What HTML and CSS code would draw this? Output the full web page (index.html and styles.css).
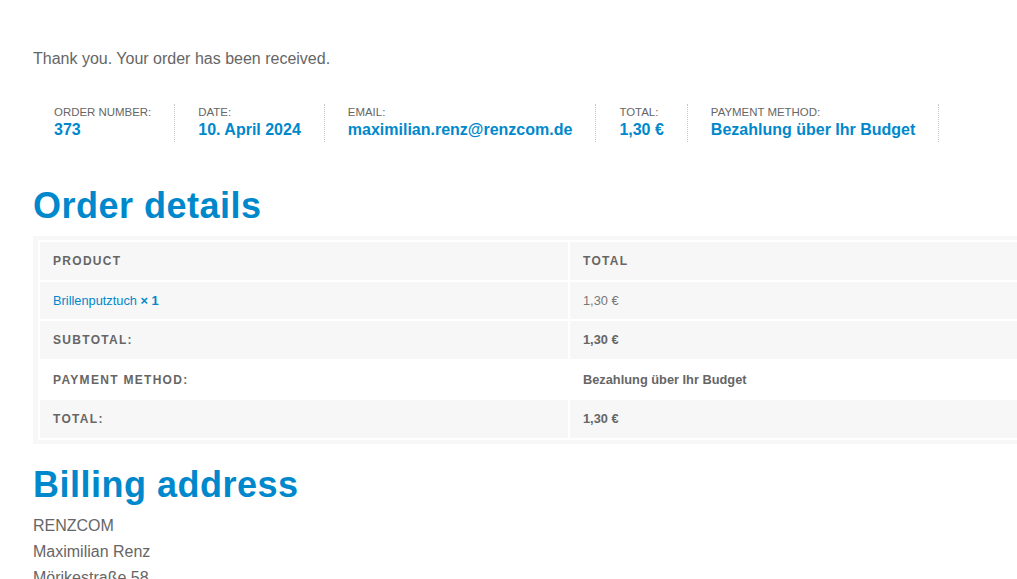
FILE: index.html
```html
<!DOCTYPE html>
<html lang="en">
<head>
    <meta charset="UTF-8">
    <title>Order received</title>
    <link rel="stylesheet" href="styles.css">
</head>
<body>
    <div class="content">
        <p class="thanks">Thank you. Your order has been received.</p>

        <!-- order summary strip -->
        <ul class="order-overview">
            <li>Order number:<strong>373</strong></li>
            <li>Date:<strong>10. April 2024</strong></li>
            <li>Email:<strong>maximilian.renz@renzcom.de</strong></li>
            <li>Total:<strong>1,30 €</strong></li>
            <li>Payment method:<strong>Bezahlung über Ihr Budget</strong></li>
        </ul>

        <h2 class="details-title">Order details</h2>
        <div class="table-wrap">
            <table class="order-table">
                <thead>
                    <tr>
                        <th class="col-product">Product</th>
                        <th>Total</th>
                    </tr>
                </thead>
                <tbody>
                    <tr>
                        <td class="col-product"><a href="#">Brillenputztuch</a> <strong class="qty">× 1</strong></td>
                        <td class="price">1,30 €</td>
                    </tr>
                </tbody>
                <tfoot>
                    <tr>
                        <th>Subtotal:</th>
                        <td class="strong">1,30 €</td>
                    </tr>
                    <tr class="plain">
                        <th>Payment method:</th>
                        <td class="strong">Bezahlung über Ihr Budget</td>
                    </tr>
                    <tr>
                        <th>Total:</th>
                        <td class="strong">1,30 €</td>
                    </tr>
                </tfoot>
            </table>
        </div>

        <h2 class="billing-title">Billing address</h2>
        <address>
            RENZCOM<br>
            Maximilian Renz<br>
            Mörikestraße 58
        </address>
    </div>
</body>
</html>
```

FILE: styles.css
```css
html, body {
    overflow-x: hidden;
}
body {
    margin: 0;
    background: #fff;
    font-family: "Liberation Sans", Arial, sans-serif;
    font-size: 16px;
    color: #666;
}
.content {
    padding-left: 33px;
    width: 1100px;
}
.thanks {
    margin: 47px 0 0;
    line-height: 24px;
}

.order-overview {
    list-style: none;
    margin: 33px 0 0;
    padding: 0 0 0 21px;
    display: flex;
}
.order-overview li {
    font-size: 11.44px;
    line-height: 13px;
    text-transform: uppercase;
    padding: 2px 23px 2px 0;
    margin-right: 23px;
    border-right: 1px dotted #c8c8c8;
}
.order-overview strong {
    display: block;
    margin-top: 1px;
    text-transform: none;
    font-size: 16px;
    line-height: 20px;
    color: #0088cc;
}

h2 {
    margin: 0;
    font-size: 36px;
    line-height: 43px;
    letter-spacing: 0.5px;
    color: #0088cc;
}
.details-title {
    margin-top: 42px;
}

.table-wrap {
    margin-top: 9px;
    background: #f7f7f7;
    padding: 4px 0 4px 5px;
}
.order-table {
    width: 100%;
    background: #fff;
    border-spacing: 2px;
    font-size: 12.8px;
    line-height: 14px;
}
.order-table th,
.order-table td {
    background: #f7f7f7;
    padding: 12px 13px 11.5px;
    text-align: left;
}
.order-table th {
    font-size: 12px;
    font-weight: bold;
    text-transform: uppercase;
    letter-spacing: 1.3px;
    color: #666;
}
.order-table .col-product {
    width: 502px;
}
.order-table a {
    color: #0088cc;
    text-decoration: none;
}
.order-table .qty {
    color: #0088cc;
}
.order-table .price {
    color: #777;
}
.order-table .strong {
    font-weight: bold;
    color: #666;
}
.order-table tr.plain th,
.order-table tr.plain td {
    background: #fff;
}

.billing-title {
    margin-top: 19px;
}
address {
    font-style: normal;
    margin-top: 7px;
    line-height: 26px;
}
```
